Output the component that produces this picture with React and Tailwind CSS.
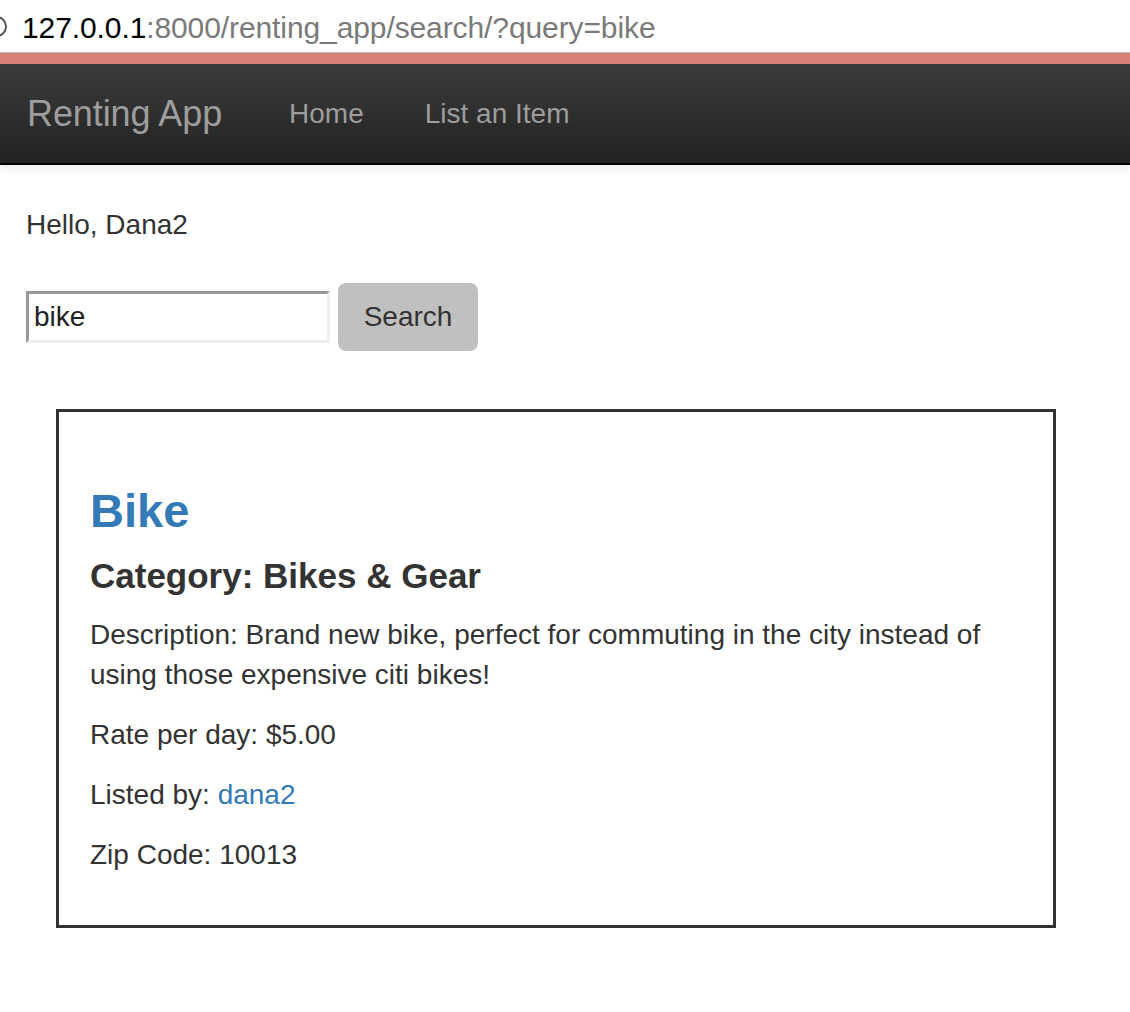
export default function App() {
  return (
    <div className="min-h-screen bg-white font-['Liberation_Sans',Arial,sans-serif] text-[#333]">
      {/* Browser address bar */}
      <div className="relative h-[52px] flex items-center overflow-hidden">
        <div className="absolute -left-[14px] top-[16px] w-[21px] h-[21px] rounded-full border-2 border-[#555]" />
        <div className="pl-[22px] pt-[3px] text-[30px] tracking-[-0.1px] leading-none">
          <span className="text-black">127.0.0.1</span>
          <span className="text-[#7a7a7a]">:8000/renting_app/search/?query=bike</span>
        </div>
      </div>
      <div className="h-px bg-[#b9b9b9]" />
      <div className="h-[11px] bg-[#d98079]" />

      {/* Navbar */}
      <nav className="h-[101px] flex items-center bg-gradient-to-b from-[#3c3c3c] to-[#222] border-b-2 border-black shadow-[0_4px_8px_rgba(0,0,0,0.08)]">
        <a className="pl-[27px] pr-[67px] text-[36px] text-[#9d9d9d] tracking-[-0.1px]">Renting App</a>
        <a className="pr-[61px] text-[28px] text-[#9d9d9d]">Home</a>
        <a className="text-[28px] text-[#9d9d9d]">List an Item</a>
      </nav>

      <main className="px-[26px]">
        <p className="mt-[40px] text-[28px] leading-[40px]">Hello, Dana2</p>

        <form className="mt-[38px] flex items-center gap-[8px]">
          <input
            defaultValue="bike"
            className="w-[304px] h-[52px] px-[5px] text-[28px] text-[#222] bg-white border-[3px] border-t-[#999] border-l-[#999] border-b-[#eee] border-r-[#eee] outline-none"
          />
          <button
            type="button"
            className="w-[140px] h-[68px] rounded-[8px] bg-[#c0c0c0] text-[28px] text-[#333]"
          >
            Search
          </button>
        </form>

        {/* Result card */}
        <div className="mt-[58px] ml-[30px] w-[1000px] border-[3px] border-[#333] px-[31px] pt-[33px] pb-[30px]">
          <h3 className="mt-[40px] mb-[20px] text-[47px] leading-[1.1] font-semibold text-[#337ab7]">
            <a>Bike</a>
          </h3>
          <h4 className="mb-[20px] text-[35px] leading-[1.1] font-semibold text-[#333]">
            Category: Bikes &amp; Gear
          </h4>
          <p className="mb-[20px] text-[28px] leading-[40px]">
            Description: Brand new bike, perfect for commuting in the city instead of using those expensive citi bikes!
          </p>
          <p className="mb-[20px] text-[28px] leading-[40px]">Rate per day: $5.00</p>
          <p className="mb-[20px] text-[28px] leading-[40px]">
            Listed by: <a className="text-[#337ab7]">dana2</a>
          </p>
          <p className="mb-[20px] text-[28px] leading-[40px]">Zip Code: 10013</p>
        </div>
      </main>
    </div>
  )
}
